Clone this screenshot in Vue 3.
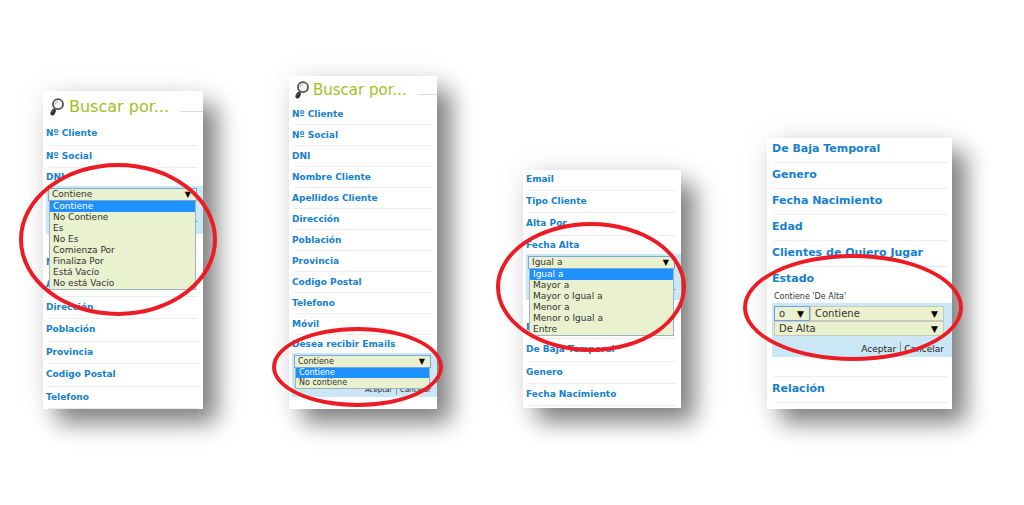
<template>
  <main class="board">
    <section
      v-for="panel in panels"
      :key="panel.id"
      class="panel"
      :class="`panel-${panel.id}`"
    >
      <header v-if="panel.title" class="head">
        <svg class="lens" viewBox="0 0 14 18" aria-hidden="true">
          <path d="M5.200 10.500 3 14" stroke="#777" stroke-width="2.600" />
          <path d="M3.600 13.300 2.600 15.200" stroke="#2f2f2f" stroke-width="4.400" stroke-linecap="round" />
          <circle cx="8" cy="6.200" r="5" fill="#f6f6f6" stroke="#505050" stroke-width="1.800" />
          <path d="M5.400 6.500a2.800 2.800 0 0 1 2.800-3" fill="none" stroke="#b5b5b5" />
          <path d="M1.800 14.200l1.400-1.200" stroke="#aaa" stroke-width="0.800" />
        </svg>
        <h2>{{ panel.title }}</h2>
      </header>

      <ul class="rows">
        <li v-for="row in panel.rows" :key="row" :class="{ open: row === panel.open }">
          <a href="#" @click.prevent>{{ row }}</a>
          <template v-if="row === panel.open">
            <p v-if="panel.summary" class="summary">{{ panel.summary }}</p>
            <form class="filter" @submit.prevent>
              <div class="fields">
                <div
                  v-for="field in panel.fields"
                  :key="field.label"
                  class="field"
                  :class="field.kind"
                >
                  <select v-model="field.value" :aria-label="field.label">
                    <option v-for="opt in field.options" :key="opt">{{ opt }}</option>
                  </select>
                  <span class="arrow">▼</span>
                </div>
                <ul v-if="panel.expanded" class="menu" role="listbox">
                  <li
                    v-for="opt in panel.fields[0].options"
                    :key="opt"
                    role="option"
                    :aria-selected="opt === panel.fields[0].value"
                    :class="{ selected: opt === panel.fields[0].value }"
                    @click="panel.fields[0].value = opt"
                  >
                    {{ opt }}
                  </li>
                </ul>
              </div>
              <div class="actions">
                <button type="submit">Aceptar</button>
                <button type="button">Cancelar</button>
              </div>
            </form>
          </template>
        </li>
      </ul>
      <div class="ring"></div>
    </section>
  </main>
</template>

<script setup>
import { ref } from "vue";

const panels = ref([
  {
    id: "texto",
    title: "Buscar por...",
    rows: [
      "Nº Cliente",
      "Nº Social",
      "DNI",
      "Nombre Cliente",
      "Apellidos Cliente",
      "Dirección",
      "Población",
      "Provincia",
      "Codigo Postal",
      "Telefono",
    ],
    open: "DNI",
    expanded: true,
    fields: [
      {
        label: "Condición",
        value: "Contiene",
        options: [
          "Contiene",
          "No Contiene",
          "Es",
          "No Es",
          "Comienza Por",
          "Finaliza Por",
          "Está Vacío",
          "No está Vacío",
        ],
      },
    ],
  },
  {
    id: "opcion",
    title: "Buscar por...",
    rows: [
      "Nº Cliente",
      "Nº Social",
      "DNI",
      "Nombre Cliente",
      "Apellidos Cliente",
      "Dirección",
      "Población",
      "Provincia",
      "Codigo Postal",
      "Telefono",
      "Móvil",
      "Desea recibir Emails",
    ],
    open: "Desea recibir Emails",
    expanded: true,
    fields: [
      {
        label: "Condición",
        value: "Contiene",
        options: ["Contiene", "No contiene"],
      },
    ],
  },
  {
    id: "fecha",
    rows: [
      "Email",
      "Tipo Cliente",
      "Alta Por",
      "Fecha Alta",
      "Baja Por",
      "De Baja Temporal",
      "Genero",
      "Fecha Nacimiento",
    ],
    open: "Fecha Alta",
    expanded: true,
    fields: [
      {
        label: "Condición",
        value: "Igual a",
        options: [
          "Igual a",
          "Mayor a",
          "Mayor o Igual a",
          "Menor a",
          "Menor o Igual a",
          "Entre",
        ],
      },
    ],
  },
  {
    id: "estado",
    rows: [
      "De Baja Temporal",
      "Genero",
      "Fecha Nacimiento",
      "Edad",
      "Clientes de Quiero Jugar",
      "Estado",
      "Relación",
    ],
    open: "Estado",
    summary: "Contiene 'De Alta'",
    expanded: false,
    fields: [
      { label: "Operador", kind: "short focused", value: "o", options: ["o", "y"] },
      {
        label: "Condición",
        kind: "rest",
        value: "Contiene",
        options: ["Contiene", "No Contiene"],
      },
      { label: "Valor", kind: "full", value: "De Alta", options: ["De Alta", "De Baja"] },
    ],
  },
]);
</script>

<style>
body {
  margin: 0;
  background: #ffffff;
}
</style>

<style scoped>
.board {
  box-sizing: border-box;
  min-height: 100vh;
  padding: 40px 72px 96px 43px;
  display: flex;
  align-items: flex-end;
  gap: 86px;
  overflow: hidden;
  font-family: "DejaVu Sans", Verdana, sans-serif;
}

.panel {
  position: relative;
  box-sizing: border-box;
  min-width: 0;
  background: #ffffff;
  box-shadow:
    14px 14px 22px rgba(0, 0, 0, 0.48),
    0 0 30px rgba(0, 0, 0, 0.08);
}

.panel-texto {
  flex: 160 1 0;
}

.panel-opcion {
  flex: 148 1 0;
  padding-bottom: 12px;
}

.panel-fecha {
  flex: 158 1 0;
  padding-bottom: 2px;
  margin-bottom: 1px;
}

.panel-estado {
  flex: 185 1 0;
  padding-bottom: 6px;
}

.head {
  display: flex;
  align-items: center;
  height: 32px;
  padding-left: 7px;
}

.head::after {
  content: "";
  flex: 1;
  height: 1px;
  margin: 8px 0 0 11px;
  background: #dcdcdc;
}

.lens {
  width: 14px;
  height: 18px;
  margin-right: 5px;
  flex: none;
}

h2 {
  margin: 0;
  font-size: 16px;
  font-weight: normal;
  line-height: 20px;
  white-space: nowrap;
  color: #9bc31c;
}

.panel-opcion .head {
  height: 28px;
  padding-left: 6px;
}

.panel-opcion .lens {
  margin-right: 4px;
}

.panel-opcion h2 {
  font-size: 15px;
}

ul {
  margin: 0;
  padding: 0;
  list-style: none;
}

.rows {
  display: grid;
}

.panel-texto .rows {
  grid-auto-rows: minmax(23px, auto) minmax(22px, auto);
}

.panel-opcion .rows {
  grid-auto-rows: minmax(21px, auto);
}

.panel-fecha .rows {
  margin-top: -1px;
  grid-auto-rows: minmax(22px, auto) minmax(22px, auto) minmax(23px, auto);
}

.panel-estado .rows {
  margin-top: -1px;
  grid-auto-rows: minmax(26px, auto);
}

.rows > li {
  display: flex;
  flex-direction: column;
  padding-left: 3px;
}

.rows > li::after {
  content: "";
  height: 1px;
  margin: auto 5px 0 2px;
  background: #ececec;
}

.panel-opcion .rows > li:last-child::after {
  display: none;
}

.rows a {
  font-size: 9px;
  font-weight: bold;
  line-height: 20px;
  white-space: nowrap;
  text-decoration: none;
  color: #1480cf;
}

.rows .open a {
  line-height: 18px;
}

.panel-estado .rows > li {
  padding-left: 5px;
}

.panel-estado .rows a {
  font-size: 11px;
  line-height: 24px;
}

.panel-estado .rows .open a {
  line-height: 23px;
}

.summary {
  margin: 0 0 0 2px;
  font-size: 8px;
  line-height: 13px;
  color: #333333;
}

.filter {
  padding: 2px 6px 2px 2px;
  background: #cbe6f5;
}

.panel-texto .filter {
  min-height: 44px;
  margin-bottom: 17px;
}

.panel-fecha .filter {
  min-height: 42px;
  margin-bottom: 16px;
}

.panel-opcion .filter {
  min-height: 40px;
}

.panel-estado .filter {
  padding: 3px 8px 1px 2px;
  margin-bottom: 19px;
}

.fields {
  position: relative;
  display: flex;
  flex-wrap: wrap;
}

.field {
  display: grid;
  flex: 1 0 100%;
  align-items: center;
}

.field > * {
  grid-area: 1 / 1;
}

.field.short {
  flex: 0 0 36px;
}

.field.rest {
  flex: 1 0 0;
}

select {
  box-sizing: border-box;
  width: 100%;
  height: 13px;
  margin: 0;
  padding: 0 3px;
  appearance: none;
  border: 1px solid #7ba7dc;
  border-radius: 0;
  outline: none;
  background: #e9f1cf;
  font-family: inherit;
  font-size: 9px;
  line-height: 11px;
  color: #333333;
}

.panel-opcion select {
  font-size: 8px;
}

.panel-estado select {
  height: 15px;
  padding: 0 4px;
  border-color: #c5cbb8;
  font-size: 10px;
  line-height: 13px;
}

.panel-estado .focused select {
  border-color: #6f9fe8;
}

.arrow {
  justify-self: end;
  margin-right: 6px;
  font-size: 8px;
  line-height: 8px;
  color: #000000;
  pointer-events: none;
}

.panel-estado .arrow {
  font-size: 9px;
}

.menu {
  position: absolute;
  top: 100%;
  left: 1px;
  right: 1px;
  z-index: 1;
  border: 1px solid #9db3c4;
  border-top: 0;
  background: #e9f1cf;
}

.menu li {
  padding-left: 3px;
  font-size: 9px;
  line-height: 11px;
  white-space: nowrap;
  color: #333333;
}

.panel-opcion .menu li {
  font-size: 8px;
  line-height: 10px;
}

.menu .selected,
.panel-opcion .menu .selected {
  background: #1e90ff;
  color: #ffffff;
}

.actions {
  display: flex;
  justify-content: flex-end;
  margin-top: 17px;
}

button {
  padding: 0;
  border: 0;
  background: none;
  font-family: inherit;
  font-size: 7px;
  line-height: 10px;
  color: #222222;
}

button + button {
  margin-left: 4px;
  padding-left: 3px;
  border-left: 1px solid #8a9aa4;
}

.panel-estado .actions {
  margin-top: 6px;
}

.panel-estado button {
  font-size: 9px;
  line-height: 14px;
}

/* red marker drawn over each open filter */
.ring {
  position: absolute;
  z-index: 2;
  border: 4px solid #ed1c24;
  border-radius: 50%;
  pointer-events: none;
}

.panel-texto .ring {
  left: -24px;
  right: -14px;
  bottom: 93px;
  height: 145px;
}

.panel-opcion .ring {
  left: -17px;
  right: -6px;
  bottom: 2px;
  height: 72px;
}

.panel-fecha .ring {
  left: -27px;
  right: -5px;
  bottom: 56px;
  height: 122px;
}

.panel-estado .ring {
  left: -24px;
  right: -11px;
  bottom: 48px;
  height: 99px;
}
</style>
